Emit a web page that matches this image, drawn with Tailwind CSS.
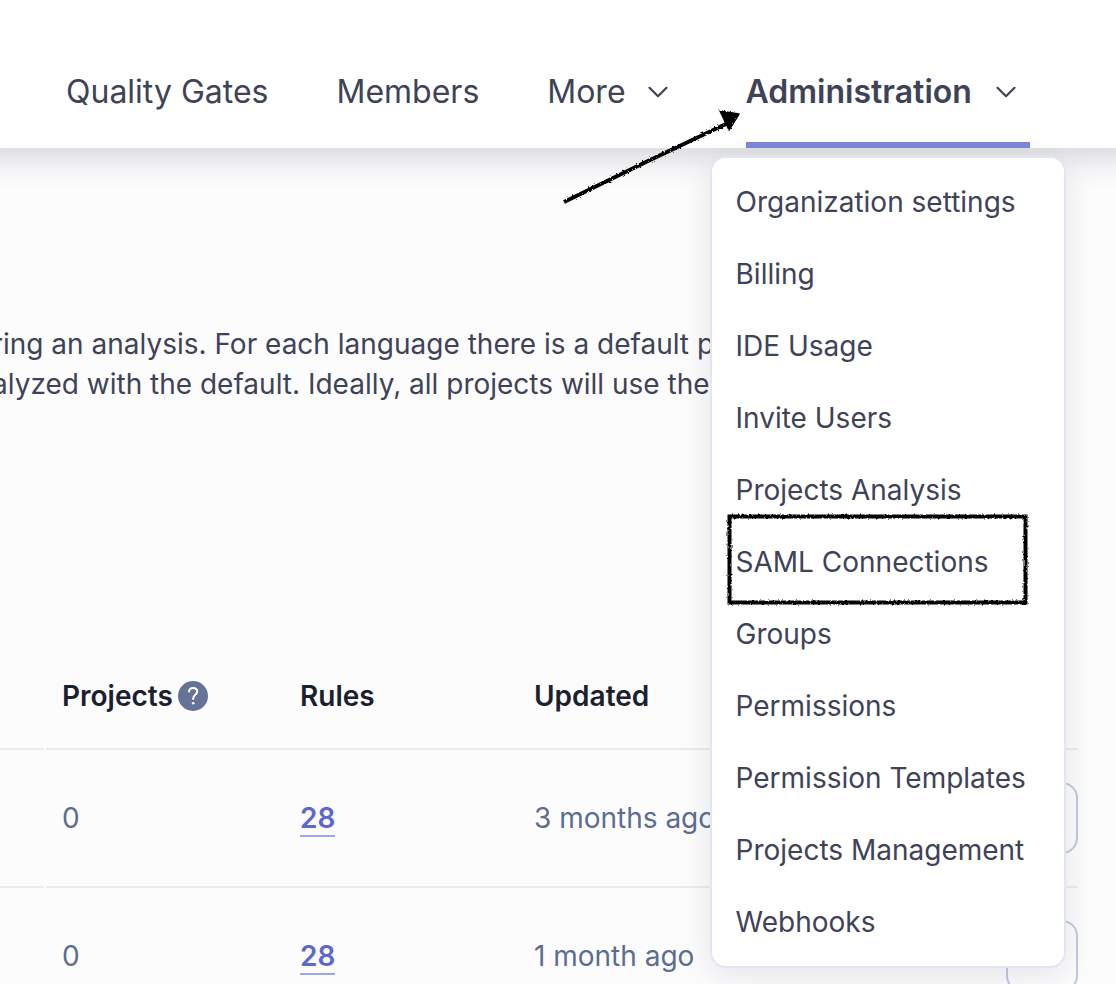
<!DOCTYPE html>
<html lang="en">
<head>
<meta charset="utf-8">
<meta name="viewport" content="width=device-width, initial-scale=1">
<title>Quality Profiles</title>
<script src="https://cdn.jsdelivr.net/npm/@tailwindcss/browser@4"></script>
</head>
<body class="flex h-screen flex-col overflow-hidden bg-[#fcfcfd] font-['Inter',sans-serif] text-[28px] leading-10 text-[#3e4357]">
  <header class="relative z-10 bg-white shadow-[0_-24px_32px_32px_rgba(29,33,47,0.19)]">
    <nav class="pt-9 pl-[66px]">
      <ul class="flex gap-[68px] text-[32px] whitespace-nowrap">
        <li><a href="#" class="flex h-28 items-center">Quality Gates</a></li>
        <li><a href="#" class="flex h-28 items-center">Members</a></li>
        <li class="-mr-1">
          <button type="button" class="flex h-28 items-center gap-2">More
            <svg class="size-12" viewBox="0 0 48 48" fill="none" stroke="currentColor" stroke-width="2.2" stroke-linecap="round" stroke-linejoin="round" aria-hidden="true"><path d="M15.500 19.800l8.500 8.400 8.500-8.400"/></svg>
          </button>
        </li>
        <li class="relative">
          <button type="button" aria-expanded="true" class="flex h-28 items-center gap-[10px] border-b-6 border-[#7b87d9] pt-[6px] font-semibold">Administration
            <svg class="size-12" viewBox="0 0 48 48" fill="none" stroke="currentColor" stroke-width="2.2" stroke-linecap="round" stroke-linejoin="round" aria-hidden="true"><path d="M15.500 19.800l8.500 8.400 8.500-8.400"/></svg>
          </button>
          <ul class="absolute top-full -left-9 mt-2 w-[356px] rounded-2xl border-2 border-[#e1e6f3] bg-white py-2 text-[28px] shadow-[0_8px_32px_rgba(29,33,47,0.1)]">
            <li><a href="#" class="flex h-18 items-center px-6">Organization settings</a></li>
            <li><a href="#" class="flex h-18 items-center px-6">Billing</a></li>
            <li><a href="#" class="flex h-18 items-center px-6">IDE Usage</a></li>
            <li><a href="#" class="flex h-18 items-center px-6">Invite Users</a></li>
            <li><a href="#" class="flex h-18 items-center px-6">Projects Analysis</a></li>
            <li class="relative"><a href="#" class="flex h-18 items-center px-6">SAML Connections</a>
              <!-- hand-drawn highlight -->
              <svg class="pointer-events-none absolute -top-4 left-3 h-[100px] w-[308px]" viewBox="0 0 308 100" fill="none" stroke="#000" stroke-width="4" aria-hidden="true">
                <defs><filter id="rough" x="-5%" y="-5%" width="110%" height="110%"><feTurbulence type="fractalNoise" baseFrequency="0.5" numOctaves="2" seed="4" result="n"/><feDisplacementMap in="SourceGraphic" in2="n" scale="3"/></filter></defs>
                <rect x="5.500" y="6.500" width="296" height="86" filter="url(#rough)"/>
              </svg>
            </li>
            <li><a href="#" class="flex h-18 items-center px-6">Groups</a></li>
            <li><a href="#" class="flex h-18 items-center px-6">Permissions</a></li>
            <li><a href="#" class="flex h-18 items-center px-6">Permission Templates</a></li>
            <li><a href="#" class="flex h-18 items-center px-6">Projects Management</a></li>
            <li><a href="#" class="flex h-18 items-center px-6">Webhooks</a></li>
          </ul>
          <!-- hand-drawn arrow pointing at the menu -->
          <svg class="pointer-events-none absolute top-16 -left-[190px] h-[110px] w-[190px]" viewBox="0 0 190 110" aria-hidden="true">
            <g filter="url(#rough)"><path d="M8 102L92 61L172 23" fill="none" stroke="#000" stroke-width="4"/><path d="M164 11L183 14L173 30Z" stroke="#000" stroke-width="1.500" stroke-linejoin="round"/></g>
          </svg>
        </li>
      </ul>
    </nav>
  </header>

  <main class="pt-44">
    <p class="-ml-2 overflow-hidden whitespace-nowrap">
      <span class="block">ring an analysis. For each language there is a default profile.</span>
      <span class="block">alyzed with the default. Ideally, all projects will use the</span>
    </p>
    <div class="mt-60 pr-[38px]">
      <table class="w-full table-fixed border-separate border-spacing-0 text-left whitespace-nowrap text-[#5d6d91]">
        <colgroup><col class="w-11"><col class="w-[2px]"><col class="w-[238px]"><col class="w-[234px]"><col><col class="w-22"></colgroup>
        <thead class="text-[#1b2030]">
          <tr class="h-[106px]">
            <td class="border-b-2 border-[#ebebeb]"></td><td></td>
            <th scope="col" class="border-b-2 border-[#ebebeb] pl-4 font-semibold">
              <span class="flex items-center gap-[5px]">Projects
                <button type="button" aria-label="Help" class="flex size-[30px] items-center justify-center rounded-full bg-[#647396]">
                  <svg class="size-[30px]" viewBox="0 0 30 30" fill="none" stroke="#fff" stroke-width="2" stroke-linecap="round" aria-hidden="true"><path d="M11 10.500C11.300 8.200 13 7 15.100 7C17.500 7 19.200 8.400 19.200 10.600C19.200 13.700 15.200 13.800 15.200 17.400V18"/><circle cx="15.200" cy="22.200" r="1.300" fill="#fff" stroke="none"/></svg>
                </button>
              </span>
            </th>
            <th scope="col" class="border-b-2 border-[#ebebeb] pl-4 font-semibold">Rules</th>
            <th scope="col" class="border-b-2 border-[#ebebeb] pl-4 font-semibold">Updated</th>
            <td class="border-b-2 border-[#ebebeb]"></td>
          </tr>
        </thead>
        <tbody>
          <tr class="h-[138px]">
            <td class="border-b-2 border-[#ebebeb]"></td><td></td>
            <td class="border-b-2 border-[#ebebeb] pl-4">0</td>
            <td class="border-b-2 border-[#ebebeb] pl-4"><a href="#" class="inline-block border-b-2 border-[#9ba7ee] leading-[34px] font-semibold text-[#5b68d0]">28</a></td>
            <td class="border-b-2 border-[#ebebeb] pl-4">3 months ago</td>
            <td class="border-b-2 border-[#ebebeb] pl-4"><button type="button" aria-label="Profile actions" class="block size-18 rounded-2xl border-2 border-[#bfc9e0]"></button></td>
          </tr>
          <tr class="h-[138px]">
            <td class="border-b-2 border-[#ebebeb]"></td><td></td>
            <td class="border-b-2 border-[#ebebeb] pl-4">0</td>
            <td class="border-b-2 border-[#ebebeb] pl-4"><a href="#" class="inline-block border-b-2 border-[#9ba7ee] leading-[34px] font-semibold text-[#5b68d0]">28</a></td>
            <td class="border-b-2 border-[#ebebeb] pl-4">1 month ago</td>
            <td class="border-b-2 border-[#ebebeb] pl-4"><button type="button" aria-label="Profile actions" class="block size-18 rounded-2xl border-2 border-[#bfc9e0]"></button></td>
          </tr>
        </tbody>
      </table>
    </div>
  </main>
</body>
</html>
